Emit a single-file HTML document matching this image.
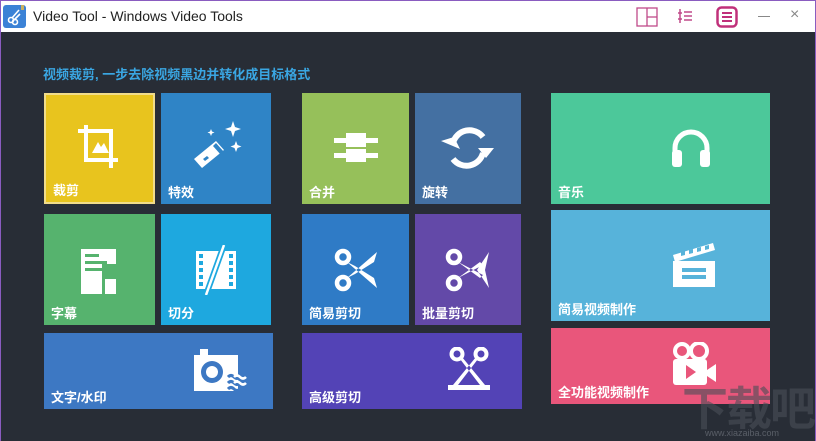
<!DOCTYPE html>
<html><head><meta charset="utf-8"><style>
*{margin:0;padding:0;box-sizing:border-box}
html,body{width:816px;height:441px;overflow:hidden}
body{background:#282d36;font-family:"Liberation Sans","Noto Sans CJK SC",sans-serif;position:relative;}
.top{position:absolute;left:0;top:0;width:816px;height:32px;background:#fff;border-top:1px solid #8a5cc0}
.title{position:absolute;left:33px;top:7px;font-size:14px;color:#222}
.logo{position:absolute;left:3px;top:4px;width:23px;height:23px;background:#3b82d6;border-radius:3px}
.t{position:absolute;color:#fff;font-weight:bold;font-size:13px}
.t span{position:absolute;left:7px;bottom:3px;white-space:nowrap}
.t svg{position:absolute}
.h{position:absolute;left:43px;top:64px;color:#3aa6e2;font-size:13px;font-weight:bold}
.wm{position:absolute;left:682px;top:384px;font-size:46px;line-height:50px;color:#4a4f58;opacity:.6;font-weight:bold;white-space:nowrap;letter-spacing:-2px}
.bl,.br{position:absolute;top:0;width:1px;height:441px;background:#8a5cc0}
</style></head><body>
<div class="top">
<div class="logo"><svg width="23" height="23" viewBox="0 0 23 23"><circle cx="8" cy="15" r="2.5" fill="none" stroke="#fff" stroke-width="1.6"/><circle cx="12" cy="17" r="2.5" fill="none" stroke="#fff" stroke-width="1.6"/><path d="M9 13 L16 5 M11 15 L17 9" stroke="#fff" stroke-width="1.6"/><rect x="18" y="0" width="3" height="5" fill="#c8b060"/></svg></div>
<div class="title">Video Tool - Windows Video Tools</div>
<svg style="position:absolute;left:636px;top:6px" width="22" height="20"><rect x="1" y="1" width="20" height="18" fill="none" stroke="#c04a8a" stroke-width="1.3"/><line x1="11" y1="1" x2="11" y2="19" stroke="#c04a8a" stroke-width="1.3"/><line x1="11" y1="10" x2="21" y2="10" stroke="#c04a8a" stroke-width="1.3"/></svg>
<svg style="position:absolute;left:677px;top:7px" width="16" height="16"><path d="M3 1v14M1 5h4M1 11h4M7 4h8M7 8h8M7 12h8" stroke="#c04a8a" stroke-width="1.5"/></svg>
<svg style="position:absolute;left:716px;top:5px" width="22" height="22"><rect x="1.5" y="1.5" width="19" height="19" rx="4" fill="none" stroke="#c0307a" stroke-width="2.5"/><path d="M6 7h10M6 11h10M6 15h10" stroke="#c0307a" stroke-width="2"/></svg>
<div style="position:absolute;left:758px;top:15px;width:12px;height:1px;background:#888"></div>
<div style="position:absolute;left:790px;top:5px;color:#888;font-size:16px">×</div>
</div>
<div class="h">视频裁剪, 一步去除视频黑边并转化成目标格式</div>

<div class="t" style="left:44px;top:93px;width:111px;height:111px;background:#e8c41e;border:2px solid #f1dc8a"><svg style="left:30px;top:30px" width="50" height="50" viewBox="0 0 50 50"><path d="M2 4h6V0h4v4h25v29h5v4h-5v6h-4v-6H8V8H2z" fill="#fff"/><path d="M12 8h21v25H12z" fill="#e8c41e"/><path d="M16 28l6-11 3 5 3-4 5 10z" fill="#fff"/></svg><span>裁剪</span></div>
<div class="t" style="left:161px;top:93px;width:110px;height:111px;background:#2f84c6"><svg style="left:30px;top:28px" width="54" height="50" viewBox="0 0 54 50"><path d="M3 38l22-18 8 9-22 18z" fill="#fff"/><path d="M12 38l4-3 2 2-4 3z" fill="#2f84c6"/><path d="M22 25l3-3 8 9-3 3z" fill="#2f84c6"/><path d="M42 0l2 6 6 2-6 2-2 6-2-6-6-2 6-2z M45 20l1.5 4 4 1.5-4 1.5-1.5 4-1.5-4-4-1.5 4-1.5z M20 8l1 2.5 2.5 1-2.5 1-1 2.5-1-2.5-2.5-1 2.5-1z" fill="#fff"/></svg><span>特效</span></div>
<div class="t" style="left:44px;top:214px;width:111px;height:111px;background:#56b36e"><svg style="left:37px;top:35px" width="36" height="45" viewBox="0 0 36 45"><path d="M0 0h35v30H24v15H0z" fill="#fff"/><path d="M4 5h14v3H4zM4 12h22v3H4zM4 19h22v3H4zM21 15h14v15H21z" fill="#56b36e"/><path d="M24 30h11v15H24z" fill="#fff"/><path d="M21 30h3v15h-3z" fill="#56b36e"/></svg><span>字幕</span></div>
<div class="t" style="left:161px;top:214px;width:110px;height:111px;background:#1ea8df"><svg style="left:33px;top:31px" width="44" height="50" viewBox="0 0 44 50"><rect x="2" y="6" width="40" height="38" fill="#fff"/><path d="M5 9h4v4H5zM5 16h4v4H5zM5 23h4v4H5zM5 30h4v4H5zM5 37h4v4H5zM35 9h4v4h-4zM35 16h4v4h-4zM35 23h4v4h-4zM35 30h4v4h-4zM35 37h4v4h-4z" fill="#1ea8df"/><path d="M30 0l-18 50" stroke="#1ea8df" stroke-width="6"/><path d="M30 0l-18 50" stroke="#fff" stroke-width="2.5"/></svg><span>切分</span></div>
<div class="t" style="left:44px;top:333px;width:229px;height:76px;background:#3d78c3"><svg style="left:150px;top:16px" width="58" height="42" viewBox="0 0 58 42"><path d="M0 6h6V0h8v6h30v36H0z" fill="#fff"/><circle cx="18" cy="23" r="11" fill="#3d78c3"/><circle cx="18" cy="23" r="6" fill="#fff"/><path d="M34 28q3-3 6 0t6 0 6 0M34 34q3-3 6 0t6 0 6 0M34 40q3-3 6 0t6 0 6 0" stroke="#3d78c3" stroke-width="3" fill="none"/><path d="M40 28q3-3 6 0t6 0M40 34q3-3 6 0t6 0" stroke="#fff" stroke-width="2.5" fill="none"/></svg><span>文字/水印</span></div>

<div class="t" style="left:302px;top:93px;width:107px;height:111px;background:#96c05a"><svg style="left:32px;top:40px" width="44" height="30" viewBox="0 0 44 30"><path d="M0 5h12V0h20v5h12v5H32v4H12v-4H0zM0 20h12v-4h20v4h12v5H32v4H12v-4H0z" fill="#fff"/></svg><span>合并</span></div>
<div class="t" style="left:415px;top:93px;width:106px;height:111px;background:#4470a2"><svg style="left:26px;top:30px" width="54" height="50" viewBox="0 0 54 50"><path d="M12 20A17 17 0 0 1 42 14" stroke="#fff" stroke-width="6" fill="none"/><path d="M0 18l13-4 6 12z" fill="#fff"/><path d="M42 30A17 17 0 0 1 12 36" stroke="#fff" stroke-width="6" fill="none"/><path d="M53 25l-8 10-8-10z" fill="#fff"/></svg><span>旋转</span></div>
<div class="t" style="left:302px;top:214px;width:107px;height:111px;background:#2f7bc6"><svg style="left:32px;top:34px" width="44" height="44" viewBox="0 0 44 44"><circle cx="9" cy="9" r="6" fill="none" stroke="#fff" stroke-width="4.5"/><circle cx="9" cy="35" r="6" fill="none" stroke="#fff" stroke-width="4.5"/><path d="M13 14l30 26-3-10-19-12zM13 30l30-26-3 10-19 12z" fill="#fff"/></svg><span>简易剪切</span></div>
<div class="t" style="left:415px;top:214px;width:106px;height:111px;background:#6349a8"><svg style="left:30px;top:34px" width="46" height="44" viewBox="0 0 46 44"><circle cx="9" cy="9" r="6" fill="none" stroke="#fff" stroke-width="4.5"/><circle cx="9" cy="35" r="6" fill="none" stroke="#fff" stroke-width="4.5"/><path d="M13 14l22 16 3-3zM13 30l22-16 3 3zM32 22l12-18-4 18 4 18z" fill="#fff"/></svg><span>批量剪切</span></div>
<div class="t" style="left:302px;top:333px;width:220px;height:76px;background:#5343b6"><svg style="left:146px;top:14px" width="42" height="46" viewBox="0 0 42 46"><circle cx="9" cy="7" r="5.5" fill="none" stroke="#fff" stroke-width="4"/><circle cx="33" cy="7" r="5.5" fill="none" stroke="#fff" stroke-width="4"/><path d="M12 12l20 26h5L14 10zM30 12L10 38H5L28 10z" fill="#fff"/><rect x="0" y="38" width="42" height="5" fill="#fff"/></svg><span>高级剪切</span></div>

<div class="t" style="left:551px;top:93px;width:219px;height:111px;background:#4cc89a"><svg style="left:120px;top:35px" width="40" height="40" viewBox="0 0 40 40"><path d="M4 26V20A16 16 0 0 1 36 20V26" stroke="#fff" stroke-width="5" fill="none"/><rect x="1" y="22" width="10" height="17" rx="3" fill="#fff"/><rect x="29" y="22" width="10" height="17" rx="3" fill="#fff"/></svg><span>音乐</span></div>
<div class="t" style="left:551px;top:210px;width:219px;height:111px;background:#57b3da"><svg style="left:122px;top:33px" width="44" height="44" viewBox="0 0 44 44"><path d="M0 12L40 0l2 7L2 19z" fill="#fff"/><path d="M8 9l4-1 0 4-4 1zM16 7l4-1 0 4-4 1zM24 5l4-1 0 4-4 1zM32 3l4-1 0 4-4 1z" fill="#57b3da"/><rect x="0" y="18" width="42" height="26" fill="#fff"/><path d="M9 25h24v4H9zM9 32h24v4H9z" fill="#57b3da"/></svg><span>简易视频制作</span></div>
<div class="t" style="left:551px;top:328px;width:219px;height:76px;background:#e9567b"><svg style="left:122px;top:14px" width="44" height="44" viewBox="0 0 44 44"><circle cx="9" cy="9" r="7" fill="none" stroke="#fff" stroke-width="4"/><circle cx="26" cy="9" r="8" fill="none" stroke="#fff" stroke-width="4"/><rect x="0" y="17" width="34" height="26" rx="3" fill="#fff"/><path d="M34 28l9-6v18l-9-6z" fill="#fff"/><path d="M13 23l10 7-10 7z" fill="#e9567b"/></svg><span>全功能视频制作</span></div>
<div class="wm">下载吧</div>
<div style="position:absolute;left:705px;top:428px;font-size:9px;color:#5a5f68;white-space:nowrap">www.xiazaiba.com</div>
<div class="bl" style="left:0"></div><div class="br" style="left:815px"></div>
</body></html>
